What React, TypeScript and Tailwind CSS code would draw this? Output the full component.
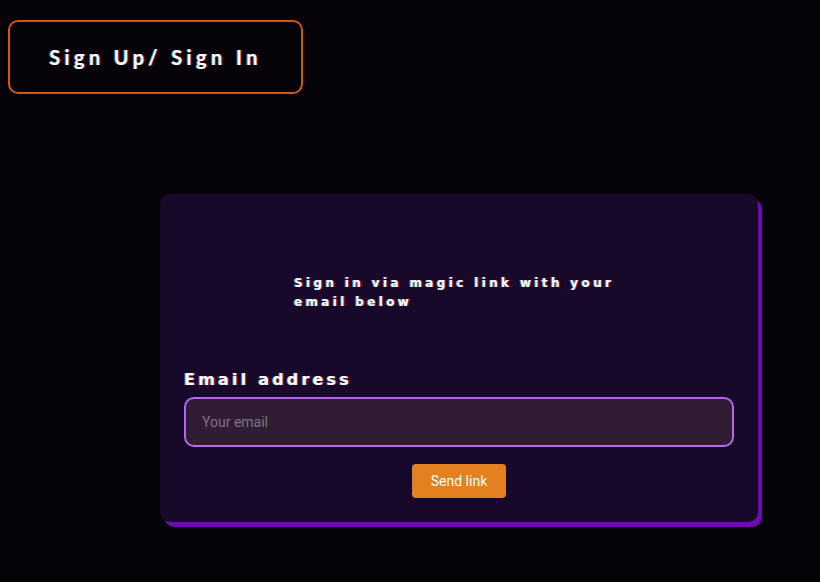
import React from "react";

const glitch =
  "[text-shadow:-1px_0_rgba(80,200,255,0.6),1px_0_rgba(255,40,90,0.6)]";

export default function App() {
  return (
    <div className="min-h-[582px] w-full bg-[#050208] pt-5 pl-2">
      <button
        className={`flex h-[74px] w-[295px] items-center justify-center rounded-[10px] border-2 border-[#d4560f] font-['Lato',sans-serif] text-[20px] font-bold tracking-[0.22em] text-white ${glitch}`}
      >
        Sign Up/ Sign In
      </button>

      <div className="mt-[100px] ml-[152px] w-[598px] rounded-[10px] bg-[#180829] px-6 pt-[80px] pb-6 shadow-[4px_5px_0_#6c0cae]">
        <div className="ml-[110px] w-[336px]">
          <h2
            className={`font-['DejaVu_Sans',sans-serif] text-[12px] leading-[19px] font-bold tracking-[0.28em] text-white ${glitch}`}
          >
            Sign in via magic link with your email below
          </h2>
        </div>

        <form className="mt-[57px]" onSubmit={(e) => e.preventDefault()}>
          <label
            className={`block font-['DejaVu_Sans',sans-serif] text-[16px] leading-[22px] font-bold tracking-[0.2em] text-white ${glitch}`}
          >
            Email address
          </label>
          <input
            type="email"
            placeholder="Your email"
            className="mt-[6px] h-[50px] w-full rounded-[10px] border-2 border-[#b06aef] bg-[#301d34] px-4 font-['Roboto',sans-serif] text-[14px] text-white outline-none placeholder:text-[#7d7480]"
          />
          <div className="mt-[17px] flex justify-center">
            <button className="h-[34px] w-[94px] rounded-[4px] bg-[#e58021] font-['Roboto',sans-serif] text-[14px] text-white">
              Send link
            </button>
          </div>
        </form>
      </div>
    </div>
  );
}
